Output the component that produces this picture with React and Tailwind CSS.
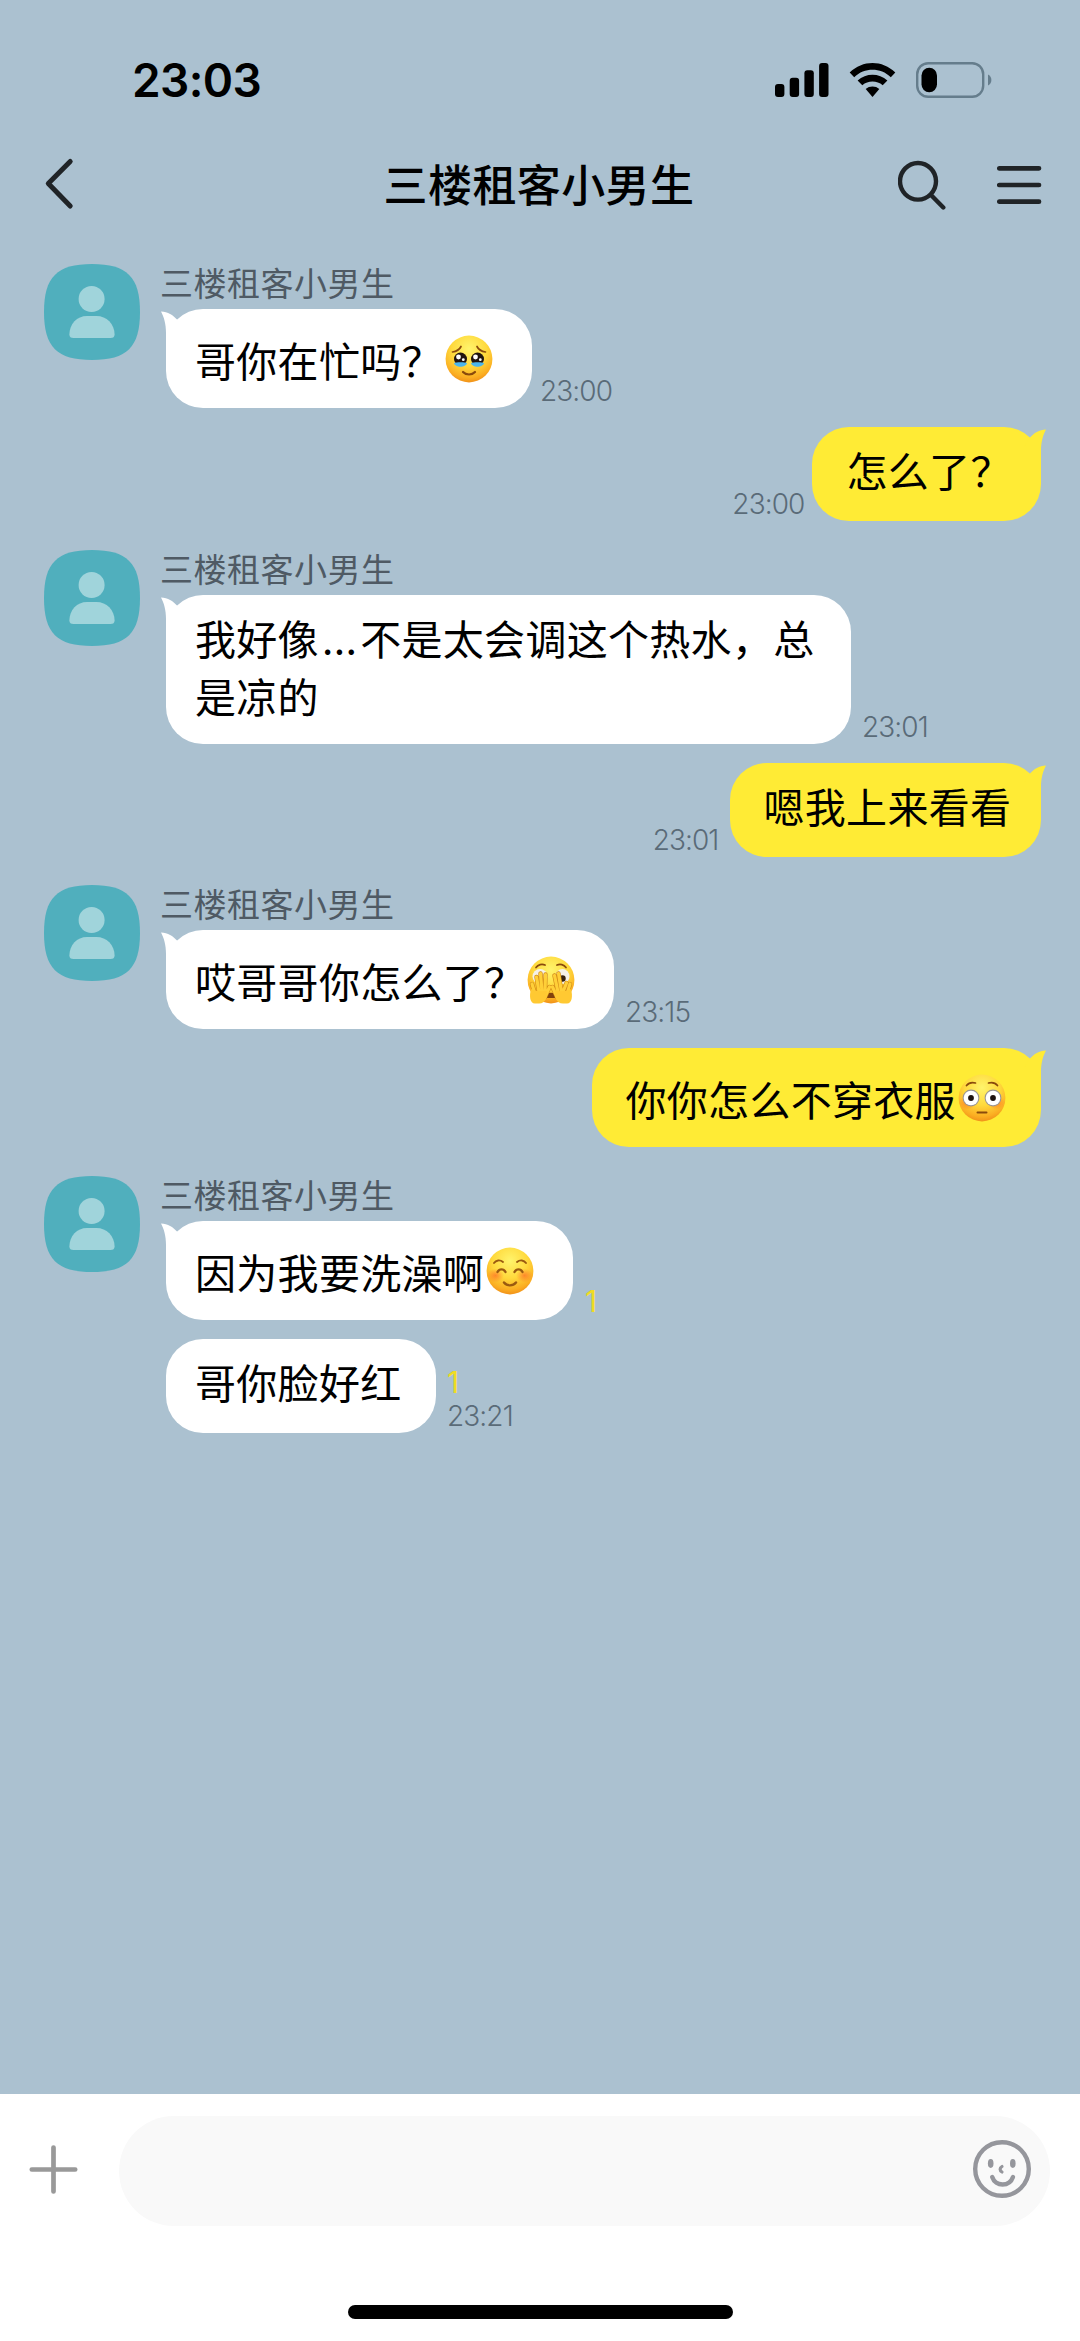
const NAME = "三楼租客小男生";

const messages = [
    { id: 1, from: "them", text: "哥你在忙吗？", emoji: "tears", time: "23:00", width: "w-[366px]", meta: "ml-[8px]" },
    { id: 2, from: "me", text: "怎么了？", time: "23:00", width: "w-[229px]", pad: "pl-[35px]", meta: "mr-[7px]" },
    { id: 3, from: "them", text: "我好像…不是太会调这个热水，总是凉的", long: true, time: "23:01", width: "w-[685px]", meta: "ml-[11px]" },
    { id: 4, from: "me", text: "嗯我上来看看", time: "23:01", width: "w-[311px]", pad: "pl-[34px]", meta: "mr-[11px]" },
    { id: 5, from: "them", text: "哎哥哥你怎么了？", emoji: "peek", time: "23:15", width: "w-[448px]", meta: "ml-[11px]" },
    { id: 6, from: "me", text: "你你怎么不穿衣服", emoji: "flushed", width: "w-[449px]", pad: "pl-[34px]" },
    { id: 7, from: "them", text: "因为我要洗澡啊", emoji: "smile", unread: true, width: "w-[407px]", meta: "ml-[12px]" },
    { id: 8, from: "them", text: "哥你脸好红", unread: true, time: "23:21", follow: true, width: "w-[270px]", meta: "ml-[11px]" },
];

const StatusBar = () => {
    return (
        <div className="flex h-[128px] items-center justify-between pl-[132px] pr-[88px] pt-[32px]">
            <span className="font-[Inter,sans-serif] text-[46px] leading-[56px] font-semibold tracking-[-0.6px] text-black">23:03</span>
            <div className="flex items-center">
                <svg className="mr-[20px]" width="54" height="36" viewBox="0 0 54 36">
                    <rect x="0" y="22" width="9.4" height="13" rx="3" />
                    <rect x="14.7" y="15.7" width="9.4" height="19.3" rx="3" />
                    <rect x="29.4" y="8.3" width="9.4" height="26.7" rx="3" />
                    <rect x="44.1" y="1" width="9.4" height="34" rx="3" />
                </svg>
                <svg className="mr-[20px]" width="47" height="36" viewBox="0 0 47 36">
                    <path d="M0.7 10.6C13.5-2.2 33.5-2.2 46.3 10.6L41.8 15.2C31.5 5.4 15.5 5.4 5.2 15.2Z" />
                    <path d="M8.6 18.5C17 10.8 30 10.8 38.4 18.5L33.7 23.3C28 18.3 19 18.3 13.3 23.3Z" />
                    <path d="M16.7 27C20.5 23.7 26.5 23.7 30.3 27L23.5 35Z" />
                </svg>
                <svg width="76" height="36" viewBox="0 0 76 36">
                    <rect x="1.2" y="1.2" width="66" height="33.6" rx="11" fill="none" stroke="#657d8c" strokeWidth="2.4" />
                    <rect x="5.5" y="5.7" width="15.5" height="24.6" rx="7.7" />
                    <path d="M72 12.6C76.5 14.5 76.5 21.5 72 23.4Z" fill="#657d8c" />
                </svg>
            </div>
        </div>
    );
};

const Header = () => {
    return (
        <div className="flex h-[112px] items-center justify-between pl-[43px] pr-[37px]">
            <svg className="mr-[105px]" width="32" height="54" viewBox="0 0 32 54" fill="none" stroke="#202427" strokeWidth="5" strokeLinecap="round" strokeLinejoin="round">
                <path d="M27.2 4.5L5.3 26.5L27.2 49" />
            </svg>
            <h1 className="-mt-[3px] text-[44px] leading-[60px] font-medium tracking-[0.4px] text-black">{NAME}</h1>
            <div className="flex items-center gap-[49px] pt-[2px]">
                <svg width="50" height="50" viewBox="0 0 50 50" fill="none" stroke="#202427" strokeWidth="4.4" strokeLinecap="round">
                    <ellipse cx="20" cy="21.3" rx="18" ry="18.3" />
                    <path d="M33.5 35.5L45.3 47.5" />
                </svg>
                <svg width="46" height="40" viewBox="0 0 46 40" fill="none" stroke="#202427" strokeWidth="4.7" strokeLinecap="round">
                    <path d="M2.3 3.3H42M2.3 20H42M2.3 36.7H42" />
                </svg>
            </div>
        </div>
    );
};

const Avatar = () => {
    return (
        <svg className="shrink-0" width="96" height="96" viewBox="0 0 96 96">
            <path fill="#50afbd" d="M48 0C83 0 96 13 96 48S83 96 48 96S0 83 0 48S13 0 48 0Z" />
            <circle cx="47.6" cy="35" r="13" fill="#a0d4db" />
            <path fill="#a0d4db" d="M25.4 70.5C25.4 60 33 52 43 52H52.5C62.5 52 70.6 60 70.6 70.5Q70.6 74 66.5 74H29.5Q25.4 74 25.4 70.5Z" />
        </svg>
    );
};

// Shared yellow ball used by all the faces
const Face = ({ id, blush, children }) => {
    return (
        <svg className="ml-[2px] shrink-0" width="48" height="48" viewBox="0 0 48 48">
            <defs>
                <radialGradient id={id} cx="0.5" cy="0.28" r="0.75">
                    <stop offset="0" stopColor="#fff46c" />
                    <stop offset="0.5" stopColor="#ffd93c" />
                    <stop offset="0.82" stopColor="#fbae22" />
                    <stop offset="1" stopColor="#ee8a17" />
                </radialGradient>
                <radialGradient id={id + "-blush"}>
                    <stop offset="0" stopColor="#ff6326" stopOpacity="0.65" />
                    <stop offset="1" stopColor="#ff6326" stopOpacity="0" />
                </radialGradient>
            </defs>
            <circle cx="24" cy="24" r="23.4" fill={`url(#${id})`} />
            {blush && (
                <g fill={`url(#${id}-blush)`}>
                    <ellipse cx="9.5" cy="28.5" rx="8.5" ry="7" />
                    <ellipse cx="38.5" cy="28.5" rx="8.5" ry="7" />
                </g>
            )}
            {children}
        </svg>
    );
};

const Emoji = ({ type }) => {
    if (type === "tears") {
        return (
            <Face id="tears">
                <g fill="none" stroke="#8a4a0c" strokeWidth="1.7" strokeLinecap="round">
                    <path d="M7.5 17C11 16.5 14.5 14.5 16 11.5" />
                    <path d="M40.5 17C37 16.5 33.5 14.5 32 11.5" />
                    <path d="M18 37C21 40.3 27 40.3 30 37" strokeWidth="2.2" />
                </g>
                <circle cx="15.5" cy="24" r="6.5" fill="#20140f" />
                <circle cx="32.5" cy="24" r="6.5" fill="#20140f" />
                <path d="M9 28C11 27 20 27 22 28C21 33 10 33 9 28Z" fill="#4cb6ec" />
                <path d="M26 28C28 27 37 27 39 28C38 33 27 33 26 28Z" fill="#4cb6ec" />
                <g fill="#fff">
                    <circle cx="13.5" cy="22" r="2.4" />
                    <circle cx="18.3" cy="24.7" r="1.4" />
                    <circle cx="30.5" cy="22" r="2.4" />
                    <circle cx="35.3" cy="24.7" r="1.4" />
                </g>
            </Face>
        );
    }
    if (type === "peek") {
        return (
            <Face id="peek">
                <g fill="none" stroke="#8a4a0c" strokeWidth="1.7" strokeLinecap="round">
                    <path d="M9 11.5C11 8.5 15 7.5 18 9" />
                    <path d="M30 9C33 7.5 37 8.5 39 11.5" />
                </g>
                <ellipse cx="13" cy="20.5" rx="7.5" ry="7.5" fill="#f4f1e8" />
                <ellipse cx="35.5" cy="20.5" rx="7" ry="7.5" fill="#f4f1e8" />
                <circle cx="35.5" cy="22.5" r="3.2" fill="#35210f" />
                <path d="M18 42C20 35 28 35 30 42Z" fill="#81420d" />
                {/* hands: four fingers fanned towards the middle, thumb outside */}
                <g fill="none" strokeLinecap="round">
                    <g stroke="#d18a17" strokeWidth="4.4">
                        <path d="M5 28L8 38M9.500 21L12 36M13.500 17.500L15 36M18.500 18.500L18 36M22.500 31L18 41" />
                        <path d="M43 28L40 38M39.500 27L36 36M31.500 17.500L34.500 36M27.500 19.500L31 36M25.500 31L30 41" />
                    </g>
                    <g stroke="#ffcf38" strokeWidth="3.2">
                        <path d="M5 28L8 38M9.500 21L12 36M13.500 17.500L15 36M18.500 18.500L18 36M22.500 31L18 41" />
                        <path d="M43 28L40 38M39.500 27L36 36M31.500 17.500L34.500 36M27.500 19.500L31 36M25.500 31L30 41" />
                    </g>
                </g>
                <path d="M4 33C8 36 16 35 19.500 35C21 40 19 47.500 12 47.500H8C3 47.500 2 40 4 33Z" fill="#ffc932" />
                <path d="M44 33C40 36 32 35 28.500 35C27 40 29 47.500 36 47.500H40C45 47.500 46 40 44 33Z" fill="#ffc932" />
            </Face>
        );
    }
    if (type === "flushed") {
        return (
            <Face id="flushed" blush>
                <g fill="none" stroke="#8a4a0c" strokeWidth="1.7" strokeLinecap="round">
                    <path d="M8.5 11.5C10.5 9 14 8 17.5 9" />
                    <path d="M30.5 9C34 8 37.5 9 39.5 11.5" />
                    <path d="M19.5 38.5H28.5" strokeWidth="2" />
                </g>
                <circle cx="13" cy="24" r="8.4" fill="#9b9693" />
                <circle cx="35" cy="24" r="8.4" fill="#9b9693" />
                <circle cx="13" cy="24" r="7.3" fill="#fff" />
                <circle cx="35" cy="24" r="7.3" fill="#fff" />
                <circle cx="13" cy="24" r="2.9" fill="#1c1210" />
                <circle cx="35" cy="24" r="2.9" fill="#1c1210" />
            </Face>
        );
    }
    return (
        <Face id="smile" blush>
            <g fill="none" stroke="#9a5a10" strokeWidth="1.9" strokeLinecap="round">
                <path d="M8 16C10 13 14 12.5 17 15" />
                <path d="M31 15C34 12.5 38 13 40 16" />
                <path d="M11.5 25C13.5 21.5 17.5 21.5 19.5 25" strokeWidth="2.4" />
                <path d="M28.5 25C30.5 21.5 34.5 21.5 36.5 25" strokeWidth="2.4" />
                <path d="M18 35.5C21 39.3 27 39.3 30 35.5" strokeWidth="2.4" />
            </g>
        </Face>
    );
};

const Bubble = ({ message }) => {
    const mine = message.from === "me";
    const color = mine ? "bg-[#ffeb35]" : "bg-white";
    const height = message.long ? "h-[149px]" : message.emoji ? "h-[99px] pt-[8px]" : "h-[94px]";

    return (
        <div className={`relative shrink-0 rounded-[37px] ${color} ${height} ${message.width}`}>
            {!message.follow && (
                <svg
                    className={mine ? "absolute top-0 -right-[5px] -scale-x-100" : "absolute top-0 -left-[5px]"}
                    width="24"
                    height="40"
                    viewBox="0 0 24 40"
                    fill={mine ? "#ffeb35" : "#ffffff"}
                >
                    <path d="M0 2.5C7 3 12 6 16 10.5L22 20V40H5V24C5 15 3 8 0 2.5Z" />
                </svg>
            )}
            <div className={`relative flex items-center pt-[13px] ${message.pad || "pl-[29px]"}`}>
                <p className="text-[41px] leading-[58px] tracking-[0.3px] text-black">
                    {message.long ? (
                        <>
                            我好像
                            <span className="inline-block w-[41.300px] text-center font-[Inter,sans-serif] leading-none">…</span>
                            不是太会调这个热水，总
                            <br />
                            是凉的
                        </>
                    ) : (
                        message.text
                    )}
                </p>
                {message.emoji && <Emoji type={message.emoji} />}
            </div>
        </div>
    );
};

const Meta = ({ message }) => {
    if (!message.time && !message.unread) return null;

    return (
        <div className={`flex flex-col font-[Inter,sans-serif] text-[28px] leading-[32px] font-[350] tracking-[-0.9px] text-[#5a6b78] ${message.meta} ${message.time ? "pb-[1px]" : "pb-[1px]"}`}>
            {message.unread && <span className="text-[30px] leading-[36px] font-normal text-[#f0dc22]">1</span>}
            {message.time && <span>{message.time}</span>}
        </div>
    );
};

const Message = ({ message }) => {
    if (message.from === "me") {
        return (
            <div className="flex items-end justify-end pt-[19px] pr-[39.500px]">
                <Meta message={message} />
                <Bubble message={message} />
            </div>
        );
    }

    if (message.follow) {
        return (
            <div className="flex items-end pt-[19px] pl-[166px]">
                <Bubble message={message} />
                <Meta message={message} />
            </div>
        );
    }

    return (
        <div className="flex items-start pt-[28.500px] pl-[44px]">
            <Avatar />
            <div className="ml-[20px] flex flex-col">
                <span className="h-[45px] text-[33px] leading-[37px] tracking-[0.500px] text-[#4f5a64]">{NAME}</span>
                <div className="ml-[6px] flex items-end">
                    <Bubble message={message} />
                    <Meta message={message} />
                </div>
            </div>
        </div>
    );
};

const InputBar = () => {
    return (
        <div className="flex h-[247px] flex-col items-center justify-between bg-white pt-[22px] pb-[22px]">
            <div className="flex w-full items-center pl-[29px] pr-[30px]">
                <svg className="mr-[41px] mb-[3px]" width="49" height="49" viewBox="0 0 49 49" fill="none" stroke="#999999" strokeWidth="4.7" strokeLinecap="round">
                    <path d="M24.5 2.5V46.5M2.8 24.5H46.2" />
                </svg>
                <div className="flex h-[110px] flex-1 items-center justify-end rounded-full bg-[#f9f9f9] pr-[18px]">
                    <svg className="mb-[4px]" width="60" height="60" viewBox="0 0 60 60" fill="none" stroke="#95969c" strokeWidth="4.4" strokeLinecap="round">
                        <circle cx="30" cy="30" r="26.8" />
                        <path d="M20.2 38C23.5 48 37.5 48 41 38" />
                        <path d="M30 27.5C27.5 29 27.5 31.5 30 33" strokeWidth="3.2" />
                        <ellipse cx="18.7" cy="24.5" rx="2.8" ry="4.4" fill="#95969c" stroke="none" />
                        <ellipse cx="40.8" cy="24.5" rx="2.8" ry="4.4" fill="#95969c" stroke="none" />
                    </svg>
                </div>
            </div>
            <div className="h-[14px] w-[385px] rounded-full bg-black" />
        </div>
    );
};

const App = () => {
    return (
        <div className="flex h-[2341px] w-[1080px] flex-col overflow-hidden bg-[#abc1d0] font-['Noto_Sans_CJK_SC',sans-serif]">
            <StatusBar />
            <Header />
            <div className="-mt-[4.500px] flex flex-1 flex-col">
                {messages.map((message) => (
                    <Message key={message.id} message={message} />
                ))}
            </div>
            <InputBar />
        </div>
    );
};

export default App;
